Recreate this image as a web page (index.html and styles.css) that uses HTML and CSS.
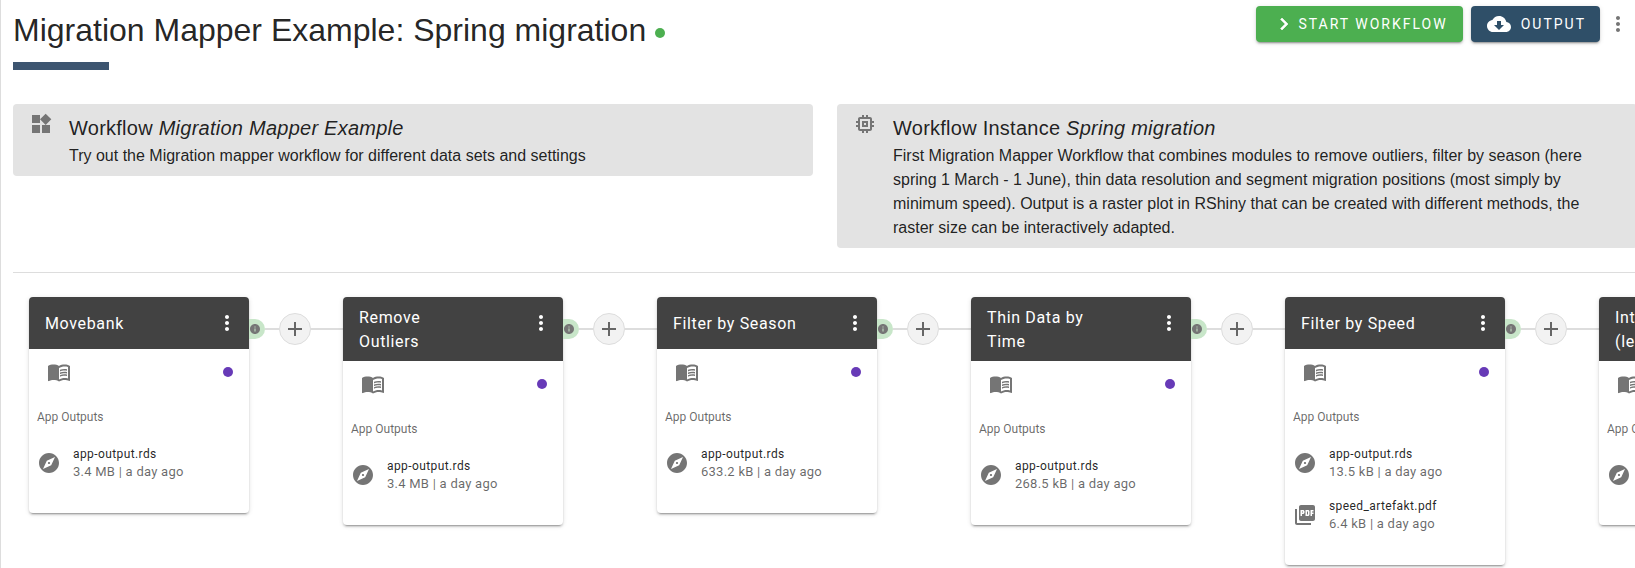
FILE: index.html
```html
<!DOCTYPE html>
<html lang="en">
<head>
  <meta charset="UTF-8">
  <title>Migration Mapper Example: Spring migration</title>
  <link rel="stylesheet" href="styles.css">
</head>
<body>

  <svg class="sprites" width="0" height="0">
    <symbol id="i-more" viewBox="0 0 24 24"><path d="M12 8c1.1 0 2-.9 2-2s-.9-2-2-2-2 .9-2 2 .9 2 2 2zm0 2c-1.1 0-2 .9-2 2s.9 2 2 2 2-.9 2-2-.9-2-2-2zm0 6c-1.1 0-2 .9-2 2s.9 2 2 2 2-.9 2-2-.9-2-2-2z"/></symbol>
    <symbol id="i-book" viewBox="0 0 24 24"><path d="M21 5c-1.11-.35-2.33-.5-3.5-.5-1.95 0-4.05.4-5.5 1.5-1.45-1.1-3.55-1.5-5.5-1.5S2.45 4.9 1 6v14.65c0 .25.25.5.5.5.1 0 .15-.05.25-.05C3.1 20.45 5.05 20 6.5 20c1.95 0 4.05.4 5.5 1.5 1.35-.85 3.8-1.5 5.5-1.5 1.65 0 3.35.3 4.75 1.05.1.05.15.05.25.05.25 0 .5-.25.5-.5V6c-.6-.45-1.25-.75-2-1zm0 13.5c-1.1-.35-2.3-.5-3.5-.5-1.7 0-4.15.65-5.5 1.5V8c1.35-.85 3.8-1.5 5.5-1.5 1.2 0 2.4.15 3.5.5v11.5z"/><path d="M17.5 10.5c.88 0 1.73.09 2.5.26V9.24c-.79-.15-1.64-.24-2.5-.24-1.7 0-3.24.29-4.5.83v1.66c1.13-.64 2.7-.99 4.5-.99zM13 12.49v1.66c1.13-.64 2.7-.99 4.5-.99.88 0 1.73.09 2.5.26V11.9c-.79-.15-1.64-.24-2.5-.24-1.7 0-3.24.3-4.5.83zM17.5 14.33c-1.7 0-3.24.29-4.5.83v1.66c1.13-.64 2.7-.99 4.5-.99.88 0 1.73.09 2.5.26v-1.52c-.79-.16-1.64-.24-2.5-.24z"/></symbol>
    <symbol id="i-explore" viewBox="0 0 24 24"><path d="M12 10.9c-.61 0-1.1.49-1.1 1.1s.49 1.1 1.1 1.1c.61 0 1.1-.49 1.1-1.1s-.49-1.1-1.1-1.1zM12 2C6.48 2 2 6.48 2 12s4.48 10 10 10 10-4.48 10-10S17.52 2 12 2zm2.19 12.19L6 18l3.81-8.19L18 6l-3.81 8.19z"/></symbol>
    <symbol id="i-pdf" viewBox="0 0 24 24"><path d="M20 2H8c-1.1 0-2 .9-2 2v12c0 1.1.9 2 2 2h12c1.1 0 2-.9 2-2V4c0-1.1-.9-2-2-2zm-8.5 7.5c0 .83-.67 1.5-1.5 1.5H9v2H7.5V7H10c.83 0 1.5.67 1.5 1.5v1zm5 2c0 .83-.67 1.5-1.5 1.5h-2.5V7H15c.83 0 1.5.67 1.5 1.5v3zm4-3H19v1h1.5V11H19v2h-1.5V7h3v1.5zM9 9.5h1v-1H9v1zM4 6H2v14c0 1.1.9 2 2 2h14v-2H4V6zm10 5.5h1v-3h-1v3z"/></symbol>
    <symbol id="i-info" viewBox="0 0 24 24"><path d="M12 2C6.48 2 2 6.48 2 12s4.48 10 10 10 10-4.48 10-10S17.52 2 12 2zm1 15h-2v-6h2v6zm0-8h-2V7h2v2z"/></symbol>
  </svg>

  <div class="page">
    <header class="top">
      <div>
        <h1>Migration Mapper Example: Spring migration <span class="status"></span></h1>
        <div class="title-bar"></div>
      </div>
      <div class="actions">
        <button class="btn btn-start">
          <svg class="icon" viewBox="0 0 24 24"><path d="M10 6L8.59 7.41 13.17 12l-4.58 4.59L10 18l6-6z"/></svg>
          START WORKFLOW
        </button>
        <button class="btn btn-output">
          <svg class="icon" viewBox="0 0 24 24"><path d="M19.35 10.04C18.67 6.59 15.64 4 12 4 9.11 4 6.6 5.64 5.35 8.04 2.34 8.36 0 10.91 0 14c0 3.31 2.69 6 6 6h13c2.76 0 5-2.24 5-5 0-2.64-2.05-4.78-4.65-4.96zM17 13l-5 5-5-5h3V9h4v4h3z"/></svg>
          OUTPUT
        </button>
        <svg class="icon icon-more"><use href="#i-more"/></svg>
      </div>
    </header>

    <section class="panels">
      <div class="panel">
        <svg class="icon panel-icon" viewBox="0 0 24 24"><path d="M13 13v8h8v-8h-8zM3 21h8v-8H3v8zM3 3v8h8V3H3zm13.66-1.31L11 7.34 16.66 13l5.66-5.66-5.66-5.65z"/></svg>
        <h3>Workflow <em>Migration Mapper Example</em></h3>
        <p>Try out the Migration mapper workflow for different data sets and settings</p>
      </div>
      <div class="panel">
        <svg class="icon panel-icon" viewBox="0 0 24 24"><path d="M15 9H9v6h6V9zm-2 4h-2v-2h2v2zm8-2V9h-2V7c0-1.1-.9-2-2-2h-2V3h-2v2h-2V3H9v2H7c-1.1 0-2 .9-2 2v2H3v2h2v2H3v2h2v2c0 1.1.9 2 2 2h2v2h2v-2h2v2h2v-2h2c1.1 0 2-.9 2-2v-2h2v-2h-2v-2h2zm-4 6H7V7h10v10z"/></svg>
        <h3>Workflow Instance <em>Spring migration</em></h3>
        <p>First Migration Mapper Workflow that combines modules to remove outliers, filter by season (here spring 1 March - 1 June), thin data resolution and segment migration positions (most simply by minimum speed). Output is a raster plot in RShiny that can be created with different methods, the raster size can be interactively adapted.</p>
      </div>
    </section>

    <hr class="divider">

    <section class="flow">

      <div class="card">
        <div class="card-head">
          <div class="card-title">Movebank</div>
          <svg class="icon card-more"><use href="#i-more"/></svg>
        </div>
        <div class="card-row">
          <svg class="icon"><use href="#i-book"/></svg>
          <span class="dot"></span>
        </div>
        <div class="card-label">App Outputs</div>
        <div class="file">
          <svg class="icon"><use href="#i-explore"/></svg>
          <div><div class="file-name">app-output.rds</div><div class="file-meta">3.4 MB | a day ago</div></div>
        </div>
      </div>
      <div class="link">
        <span class="pill"><svg class="icon"><use href="#i-info"/></svg></span>
        <span class="line short"></span>
        <span class="add"></span>
        <span class="line"></span>
      </div>

      <div class="card">
        <div class="card-head">
          <div class="card-title">Remove<br>Outliers</div>
          <svg class="icon card-more"><use href="#i-more"/></svg>
        </div>
        <div class="card-row">
          <svg class="icon"><use href="#i-book"/></svg>
          <span class="dot"></span>
        </div>
        <div class="card-label">App Outputs</div>
        <div class="file">
          <svg class="icon"><use href="#i-explore"/></svg>
          <div><div class="file-name">app-output.rds</div><div class="file-meta">3.4 MB | a day ago</div></div>
        </div>
      </div>
      <div class="link">
        <span class="pill"><svg class="icon"><use href="#i-info"/></svg></span>
        <span class="line short"></span>
        <span class="add"></span>
        <span class="line"></span>
      </div>

      <div class="card">
        <div class="card-head">
          <div class="card-title">Filter by Season</div>
          <svg class="icon card-more"><use href="#i-more"/></svg>
        </div>
        <div class="card-row">
          <svg class="icon"><use href="#i-book"/></svg>
          <span class="dot"></span>
        </div>
        <div class="card-label">App Outputs</div>
        <div class="file">
          <svg class="icon"><use href="#i-explore"/></svg>
          <div><div class="file-name">app-output.rds</div><div class="file-meta">633.2 kB | a day ago</div></div>
        </div>
      </div>
      <div class="link">
        <span class="pill"><svg class="icon"><use href="#i-info"/></svg></span>
        <span class="line short"></span>
        <span class="add"></span>
        <span class="line"></span>
      </div>

      <div class="card">
        <div class="card-head">
          <div class="card-title">Thin Data by<br>Time</div>
          <svg class="icon card-more"><use href="#i-more"/></svg>
        </div>
        <div class="card-row">
          <svg class="icon"><use href="#i-book"/></svg>
          <span class="dot"></span>
        </div>
        <div class="card-label">App Outputs</div>
        <div class="file">
          <svg class="icon"><use href="#i-explore"/></svg>
          <div><div class="file-name">app-output.rds</div><div class="file-meta">268.5 kB | a day ago</div></div>
        </div>
      </div>
      <div class="link">
        <span class="pill"><svg class="icon"><use href="#i-info"/></svg></span>
        <span class="line short"></span>
        <span class="add"></span>
        <span class="line"></span>
      </div>

      <div class="card">
        <div class="card-head">
          <div class="card-title">Filter by Speed</div>
          <svg class="icon card-more"><use href="#i-more"/></svg>
        </div>
        <div class="card-row">
          <svg class="icon"><use href="#i-book"/></svg>
          <span class="dot"></span>
        </div>
        <div class="card-label">App Outputs</div>
        <div class="file">
          <svg class="icon"><use href="#i-explore"/></svg>
          <div><div class="file-name">app-output.rds</div><div class="file-meta">13.5 kB | a day ago</div></div>
        </div>
        <div class="file">
          <svg class="icon"><use href="#i-pdf"/></svg>
          <div><div class="file-name">speed_artefakt.pdf</div><div class="file-meta">6.4 kB | a day ago</div></div>
        </div>
      </div>
      <div class="link">
        <span class="pill"><svg class="icon"><use href="#i-info"/></svg></span>
        <span class="line short"></span>
        <span class="add"></span>
        <span class="line"></span>
      </div>

      <div class="card">
        <div class="card-head">
          <div class="card-title">Interactive Map<br>(leaflet)</div>
          <svg class="icon card-more"><use href="#i-more"/></svg>
        </div>
        <div class="card-row">
          <svg class="icon"><use href="#i-book"/></svg>
          <span class="dot"></span>
        </div>
        <div class="card-label">App Outputs</div>
        <div class="file">
          <svg class="icon"><use href="#i-explore"/></svg>
          <div><div class="file-name">app-output.rds</div><div class="file-meta">3.4 MB | a day ago</div></div>
        </div>
      </div>

    </section>
  </div>

</body>
</html>
```

FILE: styles.css
```css
html, body {
  height: 100%;
}

body {
  margin: 0;
  background: #fff;
  color: rgba(0,0,0,.87);
  font-family: "Liberation Sans", Arial, sans-serif;
  overflow: hidden;
}

.sprites {
  display: block;
  height: 0;
}

.page {
  height: 568px;
  padding-left: 12px;
  border-left: 1px solid #ddd;
  overflow: hidden;
}

.icon {
  display: block;
  flex-shrink: 0;
  width: 24px;
  height: 24px;
  fill: #757575;
}

/* title row */
.top {
  display: flex;
  justify-content: space-between;
  height: 70px;
}

h1 {
  margin: 10px 0 0;
  font-size: 32px;
  font-weight: 400;
  line-height: 40px;
  white-space: nowrap;
}

.status {
  display: inline-block;
  width: 10px;
  height: 10px;
  vertical-align: 3px;
  border-radius: 50%;
  background: #4caf50;
}

.title-bar {
  width: 96px;
  height: 8px;
  margin-top: 12px;
  background: #3d5570;
}

.actions {
  display: flex;
  align-items: flex-start;
  gap: 8px;
  padding: 6px 5px 0 0;
}

.btn {
  display: flex;
  align-items: center;
  height: 36px;
  padding: 0 14px 0 16px;
  border: none;
  border-radius: 4px;
  color: #fff;
  font-family: Roboto, sans-serif;
  font-size: 14px;
  letter-spacing: 2px;
  box-shadow: 0 3px 1px -2px rgba(0,0,0,.2), 0 2px 2px 0 rgba(0,0,0,.14), 0 1px 5px 0 rgba(0,0,0,.12);
}

.btn .icon {
  fill: #fff;
  margin-right: 2px;
}

.btn-start {
  background: #4caf50;
  padding-right: 15px;
}

.btn-start .icon {
  stroke: #fff;
  stroke-width: .6;
}

.btn-output {
  background: #2f4f68;
}

.btn-output .icon {
  margin-right: 10px;
}

.icon-more {
  margin: 6px 0 0 -2px;
}

/* description panels */
.panels {
  display: flex;
  align-items: flex-start;
  gap: 24px;
  margin-top: 34px;
}

.panel {
  position: relative;
  flex-shrink: 0;
  box-sizing: border-box;
  width: 800px;
  padding: 8px 48px 8px 56px;
  background: #e3e3e3;
  border-radius: 4px;
}

.panel-icon {
  position: absolute;
  top: 8px;
  left: 16px;
}

.panel h3 {
  margin: 0;
  font-size: 20px;
  font-weight: 400;
  line-height: 32px;
  letter-spacing: .25px;
}

.panel p {
  margin: 0;
  font-size: 16px;
  line-height: 24px;
}

.divider {
  height: 1px;
  margin: 24px 0;
  border: none;
  background: #ddd;
}

/* workflow */
.flow {
  display: flex;
  align-items: flex-start;
  padding-left: 16px;
  font-family: Roboto, sans-serif;
}

.card {
  flex-shrink: 0;
  width: 220px;
  background: #fff;
  border-radius: 4px;
  box-shadow: 0 3px 1px -2px rgba(0,0,0,.2), 0 2px 2px 0 rgba(0,0,0,.14), 0 1px 5px 0 rgba(0,0,0,.12);
  padding-bottom: 24px;
}

.card-head {
  display: flex;
  align-items: flex-start;
  justify-content: space-between;
  box-sizing: border-box;
  min-height: 52px;
  padding: 0 10px 0 16px;
  background: #424242;
  border-radius: 4px 4px 0 0;
  color: #fff;
}

.card-title {
  align-self: center;
  padding: 9px 0 7px;
  font-size: 16px;
  line-height: 24px;
  letter-spacing: .65px;
}

.card-more {
  margin-top: 14px;
  fill: #fff;
}

.card-row {
  display: flex;
  align-items: center;
  justify-content: space-between;
  height: 44px;
  padding: 1px 16px 0 18px;
}

.dot {
  width: 10px;
  height: 10px;
  border-radius: 50%;
  background: #673ab7;
}

.card-label {
  margin: 15px 0 12px;
  padding-left: 8px;
  font-size: 12px;
  line-height: 16px;
  color: rgba(0,0,0,.6);
}

.file {
  display: flex;
  align-items: center;
  gap: 12px;
  height: 52px;
  padding-left: 8px;
  font-size: 12px;
  line-height: 18px;
  letter-spacing: .4px;
}

.file-meta {
  font-size: 13px;
  letter-spacing: .25px;
  color: rgba(0,0,0,.6);
}

/* connector between two cards */
.link {
  display: flex;
  flex-shrink: 0;
  align-items: center;
  width: 94px;
  height: 20px;
  margin-top: 22px;
}

.pill {
  display: flex;
  align-items: center;
  width: 16px;
  height: 20px;
  background: #c8e6c9;
  border-radius: 0 10px 10px 0;
}

.pill .icon {
  width: 12px;
  height: 12px;
}

.line {
  flex: 1;
  height: 2px;
  background: #ddd;
}

.line.short {
  flex: none;
  width: 14px;
}

.add {
  position: relative;
  flex-shrink: 0;
  box-sizing: border-box;
  width: 32px;
  height: 32px;
  border: 1px solid #ddd;
  border-radius: 50%;
  background: #f2f2f2;
}

.add::before,
.add::after {
  content: "";
  position: absolute;
  background: #666;
}

.add::before {
  left: 8px;
  right: 8px;
  top: 14.25px;
  height: 1.5px;
}

.add::after {
  top: 8px;
  bottom: 8px;
  left: 14.25px;
  width: 1.5px;
}
```
